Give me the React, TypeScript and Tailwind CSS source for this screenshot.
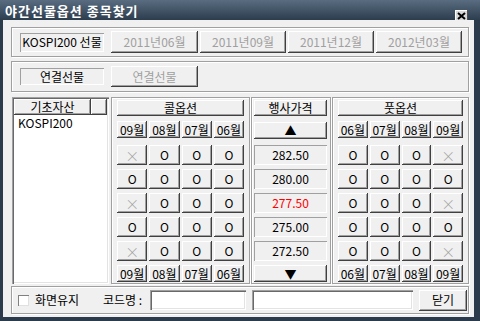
import React from 'react';

const raised = 'bg-[#f0f0f0] shadow-[inset_-1px_-1px_#404040,inset_1px_1px_#ffffff,inset_-2px_-2px_#a0a0a0]';
const sunken = 'shadow-[inset_1px_1px_#a0a0a0,inset_-1px_-1px_#ffffff]';
const etched = 'border border-[#a0a0a0] shadow-[inset_1px_1px_#ffffff,1px_1px_#ffffff]';
const deep = 'bg-white shadow-[inset_1px_1px_#a0a0a0,inset_2px_2px_#696969,inset_-1px_-1px_#ffffff,inset_-2px_-2px_#e3e3e3]';

const Btn: React.FC<{ children: React.ReactNode; className?: string; disabled?: boolean }> = ({ children, className = '', disabled }) => (
  <div className={`${raised} flex items-center justify-center leading-none text-[12px] ${disabled ? 'text-[#a0a0a0]' : 'text-black'} ${className}`}>
    {children}
  </div>
);

const Cell: React.FC<{ v: string }> = ({ v }) =>
  v === 'X' ? (
    <Btn disabled className="h-[20px]">
      <span className="text-[14px] font-light">×</span>
    </Btn>
  ) : (
    <Btn className="h-[20px]">O</Btn>
  );

const callRows = [
  ['X', 'O', 'O', 'O'],
  ['O', 'O', 'O', 'O'],
  ['X', 'O', 'O', 'O'],
  ['O', 'O', 'O', 'O'],
  ['X', 'O', 'O', 'O'],
];
const putRows = [
  ['O', 'O', 'O', 'X'],
  ['O', 'O', 'O', 'O'],
  ['O', 'O', 'O', 'X'],
  ['O', 'O', 'O', 'O'],
  ['O', 'O', 'O', 'X'],
];
const prices = ['282.50', '280.00', '277.50', '275.00', '272.50'];

const OptionGroup: React.FC<{ title: string; months: string[]; rows: string[][]; width: string }> = ({ title, months, rows, width }) => (
  <div className={`${etched} ${width} h-[187px] flex flex-col pt-[2px] px-[5px]`}>
    <Btn className="h-[16px]">{title}</Btn>
    <div className="grid grid-cols-4 gap-[2px] mt-[5px]">
      {months.map(m => (
        <Btn key={m} className="h-[17px]">{m}</Btn>
      ))}
    </div>
    <div className="flex flex-col gap-[4px] mt-[7px]">
      {rows.map((r, i) => (
        <div key={i} className="grid grid-cols-4 gap-[2px]">
          {r.map((v, j) => (
            <Cell key={j} v={v} />
          ))}
        </div>
      ))}
    </div>
    <div className="grid grid-cols-4 gap-[2px] mt-[4px]">
      {months.map(m => (
        <Btn key={m} className="h-[17px]">{m}</Btn>
      ))}
    </div>
  </div>
);

export default function App() {
  return (
    <div className="w-[480px] h-[321px] bg-[#2b3b4b] flex flex-col font-['Noto_Sans_CJK_KR',sans-serif] text-[12px] text-black overflow-hidden">
      {/* title bar */}
      <div className="h-[20px] bg-gradient-to-b from-[#5a6d80] to-[#2c3d4e] flex items-end justify-between pl-[5px] pr-[12px]">
        <span className="text-white font-bold text-[13px] tracking-[1px] leading-none pb-[3px]">야간선물옵션 종목찾기</span>
        <div className="w-[13px] h-[11px] bg-[#d8d8d8] shadow-[inset_-1px_-1px_#505050,inset_1px_1px_#ffffff] flex items-center justify-center mb-[-1px]">
          <svg width="9" height="8" viewBox="0 0 9 8">
            <path d="M1 1 L8 7 M8 1 L1 7" stroke="#000" strokeWidth="2" />
          </svg>
        </div>
      </div>

      {/* body */}
      <div className="flex-1 ml-[3px] mr-[6px] mb-[4px] bg-[#f0f0f0] flex flex-col pl-[8px] pt-[7px]">
        {/* futures months */}
        <div className={`${etched} w-[458px] h-[30px] flex items-center pl-[8px]`}>
          <div className={`${sunken} w-[84px] h-[19px] flex items-center justify-center leading-none`}>KOSPI200 선물</div>
          <div className="flex gap-[2px] ml-[7px]">
            <Btn disabled className="w-[87px] h-[22px]">2011년06월</Btn>
            <Btn disabled className="w-[86px] h-[22px]">2011년09월</Btn>
            <Btn disabled className="w-[86px] h-[22px]">2011년12월</Btn>
            <Btn disabled className="w-[86px] h-[22px]">2012년03월</Btn>
          </div>
        </div>

        {/* linked futures */}
        <div className={`${etched} w-[458px] h-[31px] mt-[4px] flex items-center pl-[8px]`}>
          <div className={`${sunken} w-[84px] h-[17px] flex items-center justify-center leading-none`}>연결선물</div>
          <Btn disabled className="w-[87px] h-[21px] ml-[7px]">연결선물</Btn>
        </div>

        {/* main */}
        <div className="flex mt-[5px] ml-[1px]">
          <div className={`${deep} w-[97px] h-[187px] p-[2px] flex flex-col`}>
            <div className="flex h-[16px]">
              <Btn className="w-[77px] h-[16px]">기초자산</Btn>
              <Btn className="flex-1 h-[16px]">{''}</Btn>
            </div>
            <div className="pl-[4px] pt-[2px] leading-none">KOSPI200</div>
          </div>

          <div className="ml-[2px]">
            <OptionGroup title="콜옵션" months={['09월', '08월', '07월', '06월']} rows={callRows} width="w-[139px]" />
          </div>

          <div className={`${etched} w-[80px] h-[187px] ml-[1px] flex flex-col pt-[2px] pl-[2px] pr-[3px]`}>
            <Btn className="h-[16px]">행사가격</Btn>
            <Btn className="h-[17px] mt-[6px] text-[10px]">▲</Btn>
            <div className="flex flex-col gap-[4px] mt-[6px]">
              {prices.map(p => (
                <div key={p} className={`${sunken} h-[20px] flex items-center justify-center leading-none ${p === '277.50' ? 'text-[#ff0000]' : 'text-black'}`}>
                  {p}
                </div>
              ))}
            </div>
            <Btn className="h-[17px] mt-[4px] text-[10px]">▼</Btn>
          </div>

          <div className="ml-[1px]">
            <OptionGroup title="풋옵션" months={['06월', '07월', '08월', '09월']} rows={putRows} width="w-[137px]" />
          </div>
        </div>

        {/* bottom bar */}
        <div className={`${etched} w-[458px] h-[28px] mt-[2px] flex items-center pl-[6px]`}>
          <div className="w-[11px] h-[11px] bg-white shadow-[inset_1px_1px_#808080,inset_-1px_-1px_#e0e0e0]" />
          <span className="ml-[6px] w-[50px] leading-none">화면유지</span>
          <span className="ml-[18px] w-[46px] leading-none">코드명 :</span>
          <div className={`${deep} w-[96px] h-[20px] ml-[1px]`} />
          <div className={`${deep} w-[161px] h-[20px] ml-[6px]`} />
          <Btn className="w-[48px] h-[21px] ml-[6px]">닫기</Btn>
        </div>
      </div>
    </div>
  );
}
